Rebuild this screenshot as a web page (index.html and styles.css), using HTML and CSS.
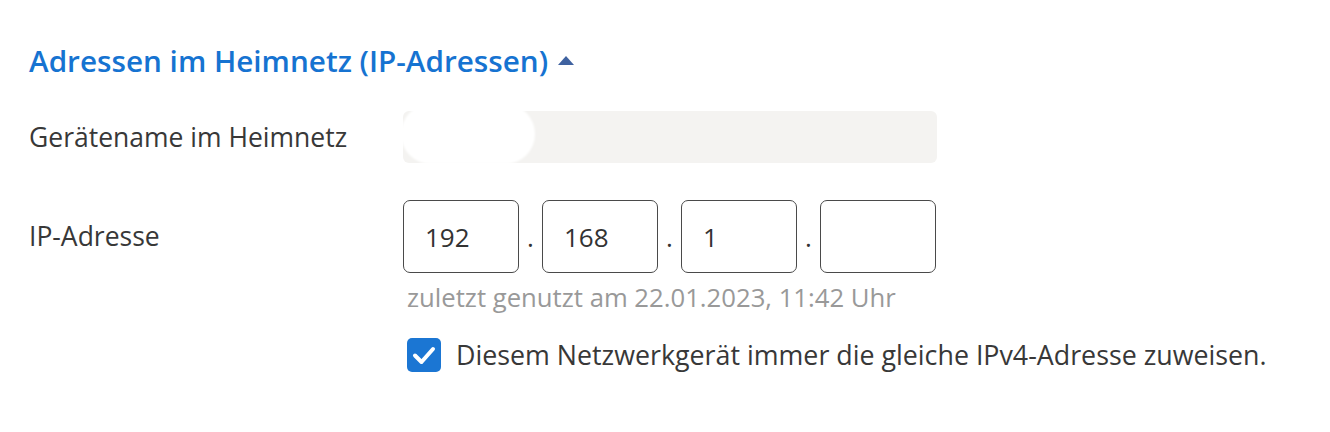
FILE: index.html
```html
<!DOCTYPE html>
<html lang="de">
<head>
  <meta charset="utf-8">
  <title>Adressen im Heimnetz</title>
  <link rel="stylesheet" href="styles.css">
</head>
<body>
  <section class="panel">
    <h2 class="section-title">
      Adressen im Heimnetz (IP-Adressen)
      <span class="caret"></span>
    </h2>

    <div class="form-row">
      <label class="form-label">Gerätename im Heimnetz</label>
      <div class="field-static">
        <span class="redact"></span>
      </div>
    </div>

    <div class="form-row form-row--ip">
      <label class="form-label">IP-Adresse</label>
      <div class="field-group">
        <div class="ip-inputs">
          <input class="ip-part" type="text" value="192">
          <span class="ip-dot">.</span>
          <input class="ip-part" type="text" value="168">
          <span class="ip-dot">.</span>
          <input class="ip-part" type="text" value="1">
          <span class="ip-dot">.</span>
          <input class="ip-part" type="text" value="">
        </div>
        <p class="hint">zuletzt genutzt am 22.01.2023, 11:42 Uhr</p>
        <label class="check">
          <span class="check-box">
            <svg viewBox="0 0 34 34" width="34" height="34">
              <path d="M8 17.5 L14.5 24 L26 11" fill="none" stroke="#fff" stroke-width="4" stroke-linecap="round" stroke-linejoin="round"/>
            </svg>
          </span>
          Diesem Netzwerkgerät immer die gleiche IPv4-Adresse zuweisen.
        </label>
      </div>
    </div>
  </section>
</body>
</html>
```

FILE: styles.css
```css
body {
  margin: 0;
  background-color: #fff;
  font-family: "Open Sans", "Lato", sans-serif;
  color: #333;
}

.panel {
  padding: 40px 0 0 29px;
}

.section-title {
  display: flex;
  align-items: center;
  gap: 10px;
  margin: 0;
  font-size: 29.7px;
  font-weight: 600;
  line-height: 42px;
  color: #1673d1;
}

.caret {
  width: 0;
  height: 0;
  margin-top: -2px;
  border-left: 8.5px solid transparent;
  border-right: 8.5px solid transparent;
  border-bottom: 9px solid #3f62a0;
}

.form-row {
  display: grid;
  grid-template-columns: 374px 534px;
  align-items: center;
  margin-top: 29px;
}

.form-row--ip {
  align-items: start;
  margin-top: 37px;
}

.form-label {
  font-size: 26.5px;
  line-height: 34px;
  color: #383838;
}

.form-row--ip .form-label {
  padding-top: 19px;
}

.field-static {
  position: relative;
  height: 52px;
  border-radius: 6px;
  background-color: #f4f3f1;
}

.redact {
  position: absolute;
  left: -2px;
  top: -7px;
  width: 134px;
  height: 60px;
  border-radius: 30px;
  background-color: #fff;
  filter: blur(1px);
}

.ip-inputs {
  display: flex;
  align-items: baseline;
}

.ip-part {
  box-sizing: border-box;
  width: 116px;
  height: 73px;
  padding: 0 0 0 21px;
  border: 1px solid #4a4a4a;
  border-radius: 7px;
  font-family: "Open Sans", "Lato", sans-serif;
  font-size: 26px;
  color: #333;
  background: #fff;
  outline: none;
}

.ip-dot {
  width: 23px;
  text-align: center;
  font-size: 26px;
  color: #333;
}

.hint {
  margin: 8px 0 0 4px;
  font-size: 25.7px;
  line-height: 34px;
  color: #999;
}

.check {
  display: flex;
  align-items: center;
  gap: 15px;
  margin: 23px 0 0 4px;
  font-size: 26.8px;
  line-height: 34px;
  color: #383838;
  white-space: nowrap;
}

.check-box {
  display: block;
  width: 34px;
  height: 34px;
  border-radius: 5px;
  background-color: #1b76d3;
}

.check-box svg {
  display: block;
}
```
